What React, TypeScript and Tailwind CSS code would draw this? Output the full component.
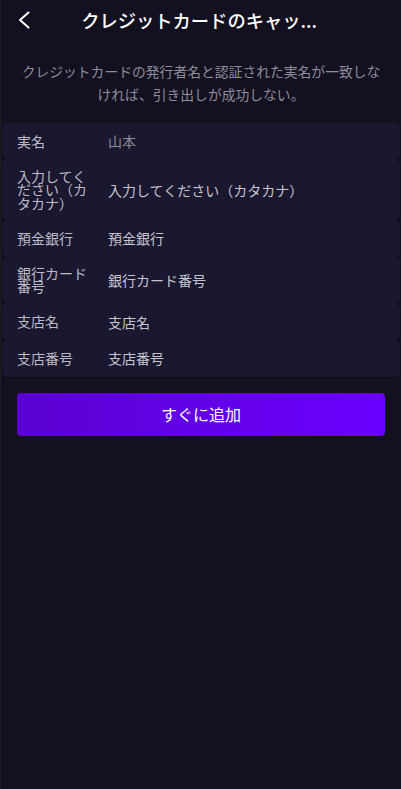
const rows: { label: string; value: string; placeholder?: boolean }[] = [
  { label: "実名", value: "山本", placeholder: true },
  { label: "入力してください（カタカナ）", value: "入力してください（カタカナ）" },
  { label: "預金銀行", value: "預金銀行" },
  { label: "銀行カード番号", value: "銀行カード番号" },
  { label: "支店名", value: "支店名" },
  { label: "支店番号", value: "支店番号" },
];

export default function App() {
  return (
    <div
      className="min-h-[789px] w-full bg-[#13111f] border-l border-[#1e201e] flex flex-col"
      style={{ fontFamily: '"Noto Sans CJK JP", "Noto Sans", sans-serif' }}
    >
      {/* header */}
      <div className="h-[40px] flex items-center relative">
        <button type="button" className="absolute left-[16px] top-[11px] w-[14px] h-[18px] flex items-center justify-center">
          <svg width="12" height="18" viewBox="0 0 12 18" fill="none">
            <polyline points="10.5,1.5 2,9 10.5,16.5" stroke="#ffffff" strokeWidth="2" strokeLinecap="round" strokeLinejoin="round" />
          </svg>
        </button>
        <h1 className="mx-auto text-[18.3px] font-medium text-white leading-none pr-[4px]">
          クレジットカードのキャッ...
        </h1>
      </div>

      {/* notice */}
      <p className="px-4 pt-[20px] pb-[17px] text-center text-[13.8px] leading-[23px] text-[#8e8d9b]">
        クレジットカードの発行者名と認証された実名が一致しなければ、引き出しが成功しない。
      </p>

      {/* form */}
      <div className="mx-[1px] flex flex-col">
        {rows.map((row) => (
          <div
            key={row.label}
            className="flex items-center min-h-[36.5px] py-[10px] pl-[15px] pr-4 rounded-[5px] bg-[#1a1730] shadow-[0_1px_1px_rgba(0,0,0,0.35)]"
          >
            <div className="w-[75px] shrink-0 text-[14px] leading-[13.5px] text-[#bdbcc6]">{row.label}</div>
            <div
              className={
                "ml-[16px] text-[14px] leading-[16px] " +
                (row.placeholder ? "text-[#8b8a97]" : "text-[#c6c5ce]")
              }
            >
              {row.value}
            </div>
          </div>
        ))}
      </div>

      <button
        type="button"
        className="mx-4 mt-[16px] h-[43px] rounded-[4px] bg-gradient-to-r from-[#5a00cf] to-[#6a00ff] text-white text-[16px]"
      >
        すぐに追加
      </button>
    </div>
  );
}
